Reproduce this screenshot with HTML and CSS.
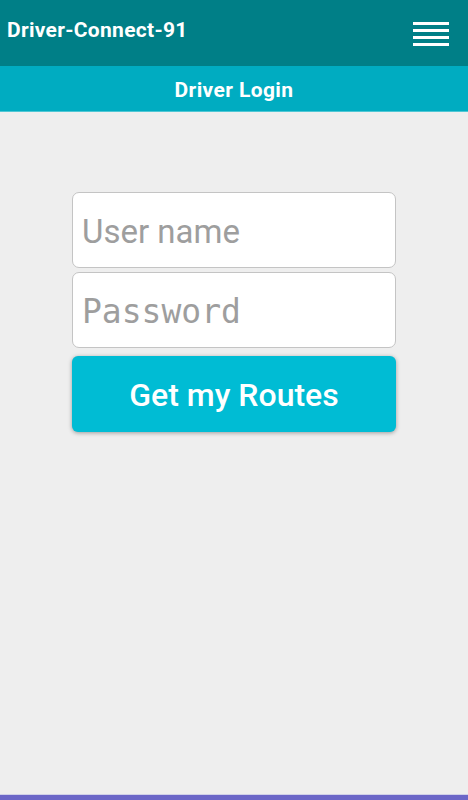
FILE: index.html
```html
<!DOCTYPE html>
<html lang="en">
<head>
    <meta charset="UTF-8">
    <meta name="viewport" content="width=device-width, initial-scale=1.0">
    <title>Driver Login</title>
    <link rel="stylesheet" href="styles.css">
</head>
<body>
    <div class="app">
        <div class="topbar">
            <div class="app-title">Driver-Connect-91</div>
            <button class="menu-button" aria-label="Menu">
                <span></span><span></span><span></span><span></span>
            </button>
        </div>
        <div class="subbar">Driver Login</div>
        <div class="content">
            <form class="login-form" onsubmit="return false">
                <input type="text" class="field" placeholder="User name">
                <input type="password" class="field field-pass" placeholder="Password">
                <button type="submit" class="submit-button">Get my Routes</button>
            </form>
        </div>
        <div class="bottom-bar"></div>
    </div>
</body>
</html>
```

FILE: styles.css
```css
body {
    margin: 0;
    padding: 0;
    font-family: Roboto, 'Liberation Sans', sans-serif;
    background-color: #eeeeee;
}
.app {
    display: flex;
    flex-direction: column;
    height: 800px;
}
.topbar {
    background-color: #007f87;
    height: 66px;
    display: flex;
    align-items: flex-start;
    justify-content: space-between;
    padding: 0 19px 0 7px;
    box-sizing: border-box;
}
.app-title {
    color: #fff;
    font-size: 21px;
    font-weight: 700;
    letter-spacing: 0.3px;
    margin-top: 18px;
}
.menu-button {
    background: none;
    border: none;
    padding: 0;
    margin-top: 22px;
    width: 36px;
    display: flex;
    flex-direction: column;
    gap: 4px;
    cursor: pointer;
}
.menu-button span {
    display: block;
    height: 3px;
    background-color: #fff;
}
.subbar {
    background-color: #00acc1;
    height: 45px;
    border-bottom: 1px solid #4fc7d4;
    color: #fff;
    font-size: 21px;
    font-weight: 700;
    letter-spacing: 0.4px;
    text-align: center;
    line-height: 48px;
}
.content {
    flex: 1;
    padding-top: 80px;
}
.login-form {
    width: 324px;
    margin: 0 auto;
    display: flex;
    flex-direction: column;
}
.field {
    height: 76px;
    margin-bottom: 4px;
    border: 1px solid #c4c4c4;
    border-radius: 7px;
    background-color: #fff;
    padding: 2px 9px 0;
    box-sizing: border-box;
    font-family: Roboto, 'Liberation Sans', sans-serif;
    font-size: 33px;
    color: #333;
    outline: none;
}
.field::placeholder {
    color: #9e9e9e;
}
.field-pass {
    font-family: 'DejaVu Sans Mono', 'Liberation Mono', monospace;
    font-size: 33px;
}
.submit-button {
    margin-top: 4px;
    height: 76px;
    border: none;
    border-radius: 6px;
    background-color: #00bcd4;
    color: #fff;
    font-family: Roboto, 'Liberation Sans', sans-serif;
    font-size: 32px;
    font-weight: 500;
    padding-top: 2px;
    box-shadow: 0 1px 4px rgba(0, 0, 0, 0.35);
    cursor: pointer;
}
.bottom-bar {
    height: 5px;
    background-color: #6b66c7;
    border-top: 1px solid #d0d0e8;
}
```
